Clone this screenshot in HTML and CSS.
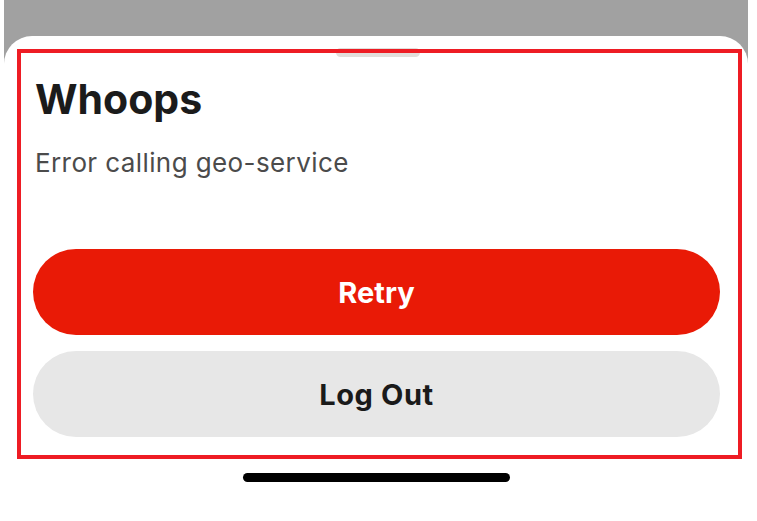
FILE: index.html
```html
<!DOCTYPE html>
<html>
<head>
<meta charset="utf-8">
<link rel="stylesheet" href="styles.css">
</head>
<body>
<div class="backdrop">
  <div class="sheet">
    <div class="handle"></div>
    <div class="frame">
      <h1 class="title">Whoops</h1>
      <p class="message">Error calling geo-service</p>
      <div class="actions">
        <button class="btn btn-primary">Retry</button>
        <button class="btn btn-secondary">Log Out</button>
      </div>
    </div>
  </div>
</div>
<div class="home-bar"><div class="home-indicator"></div></div>
</body>
</html>
```
FILE: styles.css
```css
html, body {
  margin: 0;
  padding: 0;
  background: #ffffff;
  width: 757px;
  height: 521px;
  overflow: hidden;
  font-family: Inter, Lato, "Noto Sans", sans-serif;
}

.backdrop {
  margin: 0 9px 0 4px;
  padding-top: 36px;
  background: #a1a1a1;
}

.sheet {
  position: relative;
  background: #ffffff;
  border-radius: 28px 28px 0 0;
  padding: 13px 6px 0 13px;
}

.handle {
  position: absolute;
  top: 12px;
  left: 332px;
  width: 84px;
  height: 9px;
  border-radius: 5px;
  background: #e2dedb;
}

.frame {
  position: relative;
  z-index: 1;
  border: 4px solid #ee1c24;
  height: 402px;
  padding: 0 18px 0 12px;
  display: flex;
  flex-direction: column;
}

.title {
  margin: 26px 0 0 2px;
  font-size: 41px;
  line-height: 41px;
  font-weight: 700;
  color: #1b1b1b;
}

.message {
  margin: 30px 0 0 2px;
  font-size: 26px;
  line-height: 26px;
  font-weight: 400;
  letter-spacing: 0.4px;
  color: #4b4b4b;
}

.actions {
  margin-top: 73px;
  display: flex;
  flex-direction: column;
  gap: 16px;
}

.btn {
  height: 86px;
  border: none;
  border-radius: 43px;
  font-family: Inter, Lato, "Noto Sans", sans-serif;
  font-size: 29px;
  font-weight: 700;
  padding: 0;
}

.btn-primary {
  background: #e91a06;
  color: #ffffff;
}

.btn-secondary {
  background: #e7e7e7;
  color: #1a1a1a;
  letter-spacing: 0.6px;
}

.home-bar {
  display: flex;
  justify-content: center;
  padding: 14px 4px 0 0;
}

.home-indicator {
  width: 267px;
  height: 9px;
  border-radius: 5px;
  background: #000000;
}
```
